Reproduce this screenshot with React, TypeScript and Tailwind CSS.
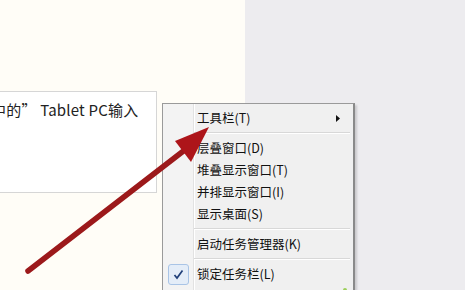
import React from "react";

const font = { fontFamily: '"Noto Sans CJK SC", "Noto Sans", sans-serif' };

function Item({ label, sub, checked }: { label: string; sub?: boolean; checked?: boolean }) {
  return (
    <div className="relative flex h-[22px] items-center">
      <div className="flex w-[30px] shrink-0 justify-center">
        {checked && (
          <div className="flex h-[21px] w-[21px] items-center justify-center rounded-[3px] border border-[#a9c4e6] bg-[#e4edf8]">
            <svg width="11" height="11" viewBox="0 0 11 11">
              <path d="M1.5 6 L4 9 L9.5 1.5" fill="none" stroke="#21407a" strokeWidth="1.7" />
            </svg>
          </div>
        )}
      </div>
      <span className="pl-[4px] text-[12.5px] leading-none text-[#111]">{label}</span>
      {sub && (
        <svg className="absolute right-[13px] top-[8px]" width="4" height="7" viewBox="0 0 4 7">
          <path d="M0 0 L4 3.5 L0 7 Z" fill="#111" />
        </svg>
      )}
    </div>
  );
}

function Sep() {
  return (
    <div className="flex h-[8px] items-center pl-[31px] pr-[3px]">
      <div className="h-[2px] w-full border-t border-[#d8d8d8] border-b-white" style={{ borderBottomWidth: 1, borderBottomStyle: "solid" }} />
    </div>
  );
}

export default function App() {
  return (
    <div className="relative flex h-[290px] w-[465px] overflow-hidden" style={font}>
      <div className="w-[245px] shrink-0 bg-[#fffdf7]">
        <div className="ml-[-1px] mt-[91px] h-[102px] w-[158px] overflow-hidden border border-[#d6d6d6] bg-white pt-[8px]">
          <p className="ml-[-9px] whitespace-nowrap text-[15px] leading-[20px] tracking-[0.2px] text-[#222]">中的” Tablet PC输入</p>
        </div>
      </div>
      <div className="flex-1 bg-[#edecef]" />

      <div className="absolute left-[162px] top-[103px] w-[193px] border border-[#9a9a9a] border-r-[2px] border-r-[#8a8a8a] bg-[#f0f0f0] pt-[3px] shadow-[2px_2px_2px_rgba(0,0,0,0.15)]">
        <div className="absolute bottom-0 left-[30px] top-0 w-[2px] border-l border-[#e2e2e2] border-r-white" style={{ borderRightWidth: 1, borderRightStyle: "solid" }} />
        <div className="absolute bottom-0 left-0 top-0 w-[30px] bg-[#f3f3f3]" />
        <div className="relative">
          <Item label="工具栏(T)" sub />
          <Sep />
          <Item label="层叠窗口(D)" />
          <Item label="堆叠显示窗口(T)" />
          <Item label="并排显示窗口(I)" />
          <Item label="显示桌面(S)" />
          <Sep />
          <Item label="启动任务管理器(K)" />
          <Sep />
          <Item label="锁定任务栏(L)" checked />
          <Item label="属性(R)" />
        </div>
        <div className="absolute left-[180px] top-[184px] h-[4px] w-[4px] rounded-full bg-[#9ccf5a]" />
      </div>

      <svg className="pointer-events-none absolute left-0 top-0" width="465" height="290" viewBox="0 0 465 290">
        <line x1="28" y1="271" x2="186" y2="149" stroke="#9c191b" strokeWidth="5.5" strokeLinecap="round" />
        <polygon points="209,127 175,141 191,162" fill="#ad151a" />
      </svg>
    </div>
  );
}
